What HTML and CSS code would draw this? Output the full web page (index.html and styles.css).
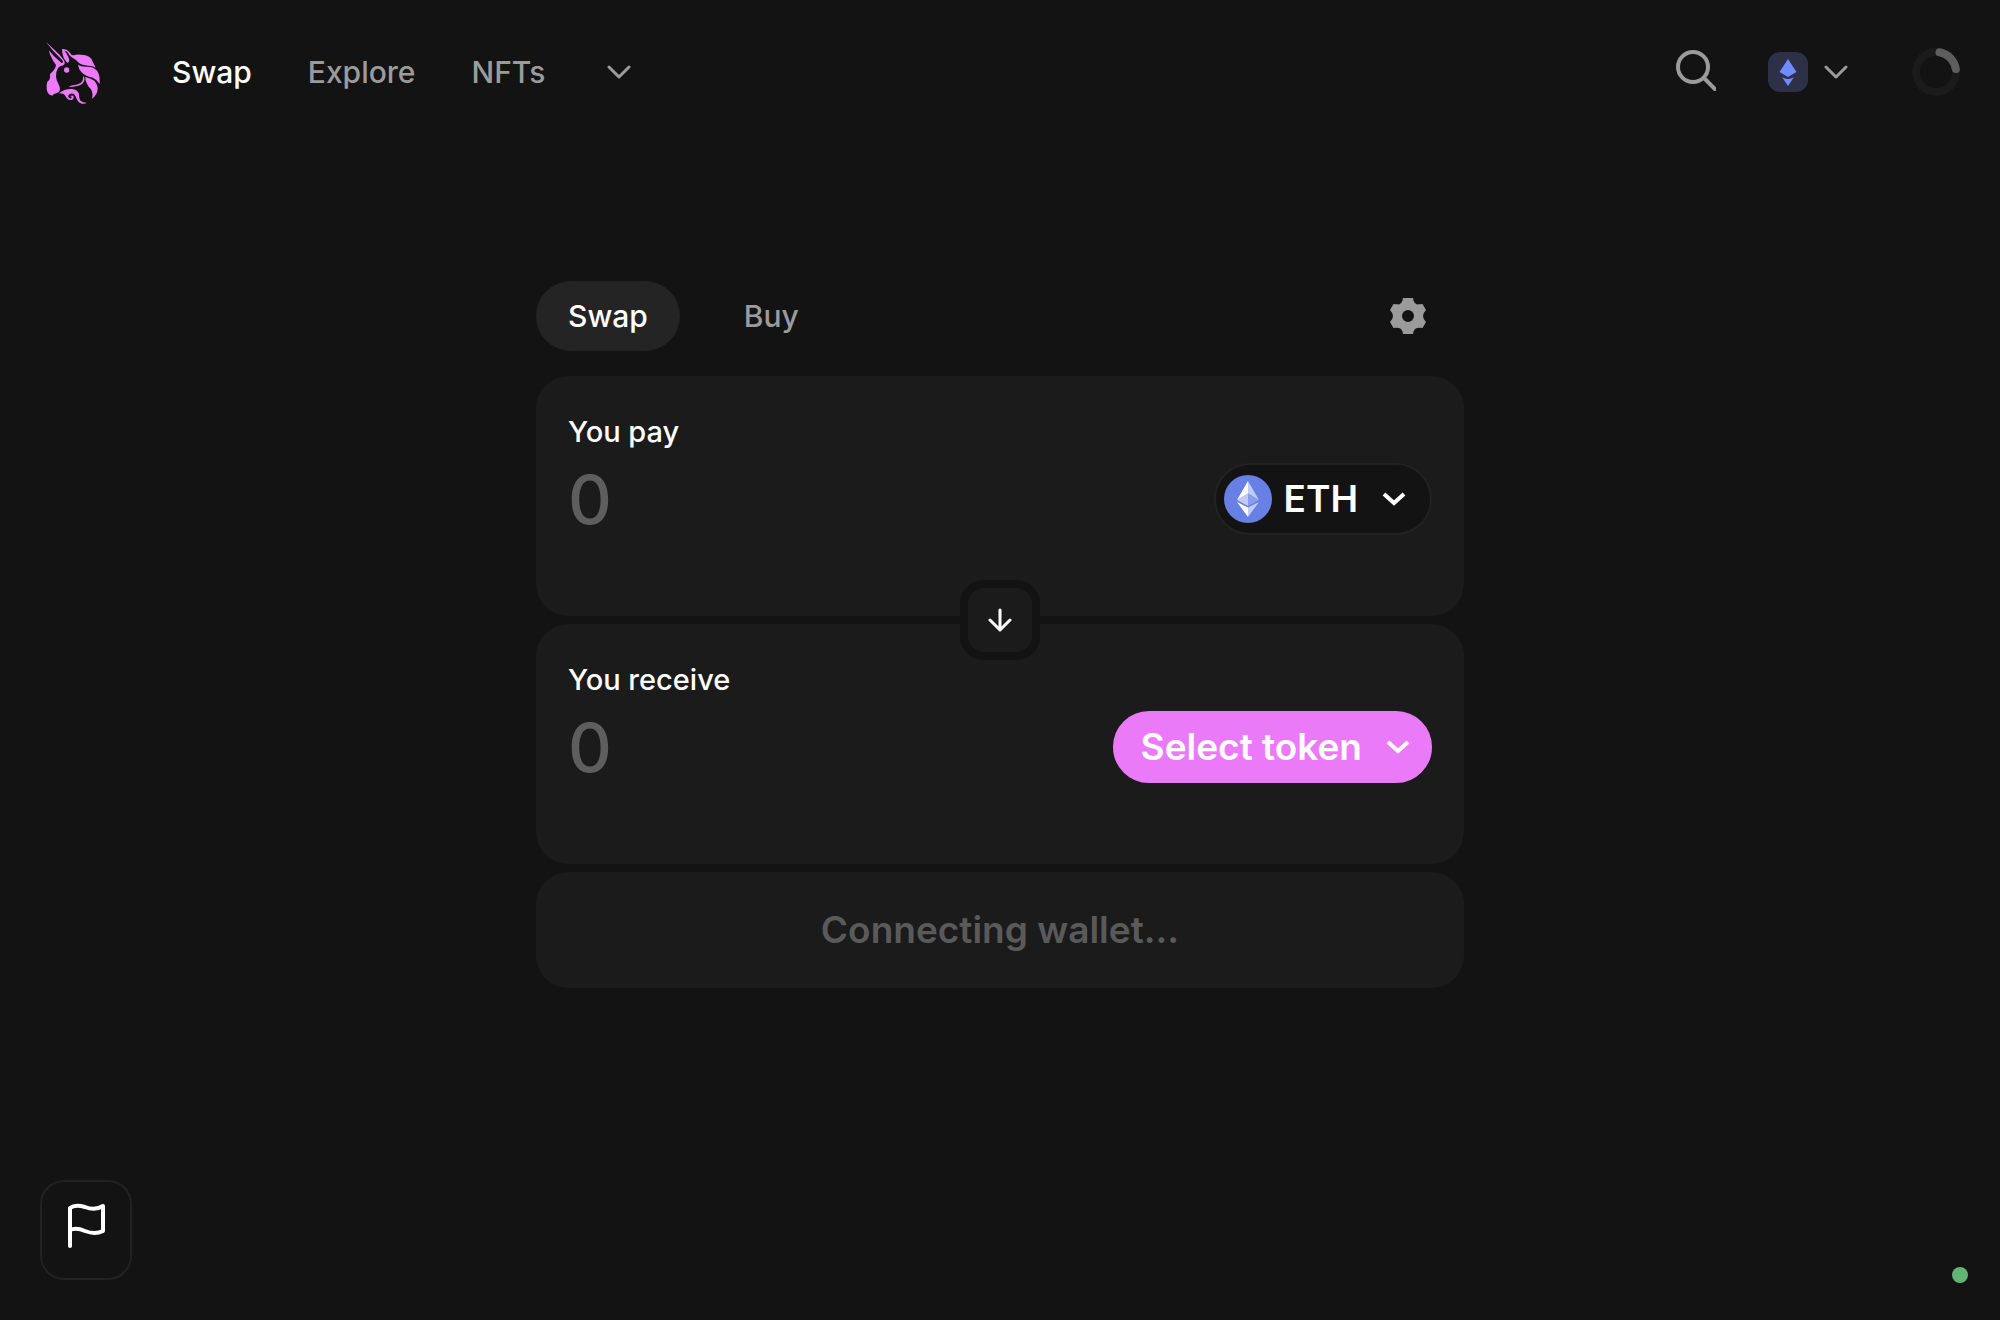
FILE: index.html
```html
<!DOCTYPE html>
<html lang="en">
<head>
<meta charset="utf-8">
<meta name="viewport" content="width=device-width, initial-scale=1">
<title>Uniswap Interface</title>
<link rel="stylesheet" href="styles.css">
</head>
<body>
<header class="header">
  <a class="logo" href="#" aria-label="Home">
    <svg width="54" height="62" viewBox="48 36 162 186" fill="#ec7af9">
      <path d="M48 36L74 60Q92 76 101 90Q106 97 104 102Q101 106 97 107L92 108Q86 110 83 116Q77 126 78 139Q79 152 85 161Q91 171 90 180Q88 188 79 190Q71 191 67 197L59 194Q50 188 50 175Q49 164 52 155Q60 149 60 143L60 132Q72 121 76 113L78 105Q69 94 64 82Q58 70 57 61L72 79L94 98Q97 101 99 97Q99 93 94 88L70 63Z"/>
      <path d="M96 57Q109 55 118 66Q124 77 132 76Q140 73 152 74Q174 74 184 86Q189 97 197 113Q188 107 174 107Q156 106 147 99Q135 87 125 82Q116 75 113 67Q109 63 104 62Q116 78 118 91Q117 97 113 99Q97 87 96 57Z"/>
      <path d="M144 104Q155 112 173 110Q190 110 199 120Q211 131 209 162Q202 149 188 143Q165 139 154 126Q146 118 144 104Z"/>
      <path d="M165 141Q183 145 193 152Q203 163 203 177Q202 195 186 206Q190 190 183 178Q168 164 165 141Z"/>
      <path d="M159 138Q166 143 162 154Q158 164 145 167Q128 171 115 171Q123 165 139 164Q153 161 157 153Q160 147 159 138Z"/>
      <circle cx="110" cy="120" r="8"/>
      <path d="M87 190Q103 176 126 177Q143 179 147 192Q147 203 150 211Q157 219 171 218Q165 222 155 221Q145 218 142 211Q139 203 136 198Q132 189 122 191Q113 194 115 201Q119 208 125 204Q126 199 121 199Q127 193 131 200Q132 208 125 210Q115 211 110 204Q105 194 99 191Q93 190 87 190Z"/>
    </svg>
  </a>
  <nav class="nav">
    <a class="nav-link active" href="#">Swap</a>
    <a class="nav-link" href="#">Explore</a>
    <a class="nav-link" href="#">NFTs</a>
  </nav>
  <button class="icon-button more" aria-label="More">
    <svg class="line" width="24" height="16" viewBox="0 0 24 16"><path d="M2 3L12 13L22 3"/></svg>
  </button>
  <div class="tools">
    <button class="icon-button" aria-label="Search">
      <svg class="line search-line" width="40" height="44" viewBox="0 0 40 44"><circle cx="17" cy="17" r="15"/><path d="M28 28L39 39"/></svg>
    </button>
    <button class="icon-button network" aria-label="Select network">
      <svg width="40" height="40" viewBox="0 0 40 40"><rect width="40" height="40" rx="12" fill="#2d3047"/><path fill="#6f8bff" d="M20 7L28.500 20L20 25L11.500 20ZM14 25Q20 29 26 25L20 34Z"/></svg>
      <svg class="line" width="24" height="16" viewBox="0 0 24 16"><path d="M2 3L12 13L22 3"/></svg>
    </button>
    <svg class="spinner" width="48" height="48" viewBox="0 0 48 48" role="img" aria-label="Connecting"><circle cx="24" cy="24" r="20" stroke="#1b1b1b"/><path d="M27.500 4.300A20 20 0 0 1 43.800 21" stroke="#5e5e5e"/></svg>
  </div>
</header>
<main class="swap">
  <div class="tabs">
    <button class="tab selected">Swap</button>
    <button class="tab">Buy</button>
    <button class="icon-button settings" aria-label="Settings">
      <svg width="36" height="36" viewBox="0 0 36 36"><path fill="#9b9b9b" fill-rule="evenodd" d="M13 0H23Q23.500 5 27 6.500Q29 6 32.500 6L36 12Q33 15 33 18Q33 21 36 24L32.500 30Q29 29.500 27 30Q23.500 31 23 36H13Q12.500 31 9 30Q7 29.500 3.500 30L0 24Q3 21 3 18Q3 15 0 12L3.500 6Q7 6 9 6.500Q12.500 5 13 0ZM18 12A6 6 0 1 0 18 24A6 6 0 1 0 18 12Z"/></svg>
    </button>
  </div>
  <div class="panels">
    <section class="panel">
      <label class="panel-label" for="pay">You pay</label>
      <div class="panel-row">
        <input class="amount" id="pay" type="text" inputmode="decimal" placeholder="0">
        <button class="token">
          <svg width="48" height="48" viewBox="0 0 48 48"><circle cx="24" cy="24" r="24" fill="#687fe3"/><path fill="#fff" d="M24 6V18.500L13 25ZM24 32.500V42L13 27Z"/><path fill="#c1cbf5" d="M24 6L35 25L24 18.500ZM24 32.500L35 27L24 42ZM13 25L24 18.500V31Z"/><path fill="#8a9dec" d="M24 18.500L35 25L24 31Z"/></svg>
          <span>ETH</span>
          <svg class="line strong" width="24" height="16" viewBox="0 0 24 16"><path d="M2 3L12 12L22 3"/></svg>
        </button>
      </div>
    </section>
    <button class="flip" aria-label="Switch tokens">
      <svg class="line arrow" width="24" height="24" viewBox="0 0 24 24"><path d="M12 2V22M2 12L12 22L22 12"/></svg>
    </button>
    <section class="panel">
      <label class="panel-label" for="receive">You receive</label>
      <div class="panel-row">
        <input class="amount" id="receive" type="text" inputmode="decimal" placeholder="0">
        <button class="token select">
          <span>Select token</span>
          <svg class="line strong" width="24" height="16" viewBox="0 0 24 16"><path d="M2 3L12 12L22 3"/></svg>
        </button>
      </div>
    </section>
  </div>
  <button class="submit" disabled>Connecting wallet...</button>
</main>
<button class="flag" aria-label="Feature flags">
  <svg class="line" width="40" height="48" viewBox="0 0 40 48"><path d="M4 44V6Q9 2 19 5Q29 9 37 4V29Q29 33 19 29Q10 25 4 28"/></svg>
</button>
<span class="status" role="img" aria-label="Network online"></span>
</body>
</html>
```
FILE: styles.css
```css
* { box-sizing: border-box; }
body {
  margin: 0;
  min-height: 100vh;
  background: #131313;
  color: #fff;
  font: 500 30px/40px Inter, "Liberation Sans", sans-serif;
}
button, input {
  margin: 0;
  padding: 0;
  border: 0;
  background: none;
  color: inherit;
  font: inherit;
}
button { cursor: pointer; }
a { color: inherit; text-decoration: none; }
svg { display: block; flex: none; }

.line {
  fill: none;
  stroke: currentColor;
  stroke-width: 3;
  stroke-linecap: round;
  stroke-linejoin: round;
}
.search-line { stroke-width: 4; }
.strong { stroke-width: 4; stroke-linecap: butt; stroke-linejoin: miter; }

.header {
  display: flex;
  align-items: center;
  height: 144px;
  padding: 0 40px 0 46px;
}
.logo { padding-top: 2px; }
.nav { display: flex; gap: 56px; margin-left: 72px; }
.nav-link { color: #9b9b9b; }
.nav-link.active { color: #fff; }
.icon-button { display: flex; align-items: center; color: #9b9b9b; }
.more { margin-left: 62px; }
.tools { display: flex; align-items: center; gap: 52px; margin-left: auto; }
.network { gap: 16px; }
.spinner { margin-left: 12px; fill: none; stroke-width: 8; stroke-linecap: round; }

.swap {
  max-width: 928px;
  margin: 0 auto;
  padding: 137px 0 160px;
}
.tabs { display: flex; align-items: center; margin-bottom: 25px; }
.tab {
  height: 70px;
  padding: 0 32px;
  border-radius: 35px;
  color: #9b9b9b;
}
.tab.selected { background: #242424; color: #fff; }
.tab + .tab { margin-left: 32px; }
.settings { margin: 0 38px 0 auto; }

.panels { display: flex; flex-direction: column; gap: 8px; position: relative; }
.panel {
  min-height: 240px;
  padding: 36px 32px;
  border-radius: 32px;
  background: #1b1b1b;
}
.panel-label { display: block; font-size: 29px; }
.panel-row { display: flex; align-items: center; justify-content: space-between; margin-top: 11px; }
.amount {
  flex: 1;
  min-width: 0;
  height: 72px;
  font-size: 68px;
  line-height: 72px;
  outline: 0;
}
.amount::placeholder { color: #5e5e5e; opacity: 1; }
.token {
  display: flex;
  align-items: center;
  height: 72px;
  padding: 0 24px 0 8px;
  border: 2px solid #222;
  border-radius: 36px;
  background: #131313;
  font-size: 37px;
  font-weight: 600;
}
.token span { padding: 0 24px 0 12px; }
.token.select { padding-left: 14px; padding-right: 20px; border-color: #eb7af8; background: #eb7af8; }
.flip {
  position: absolute;
  top: 50%;
  left: 50%;
  transform: translate(-50%, -50%);
  display: grid;
  place-items: center;
  width: 80px;
  height: 80px;
  border: 8px solid #131313;
  border-radius: 24px;
  background: #1b1b1b;
}
.submit {
  width: 100%;
  margin-top: 8px;
  padding: 38px 32px;
  border-radius: 32px;
  background: #1b1b1b;
  color: #5a5a5a;
  font-size: 37px;
  font-weight: 600;
}

.flag {
  position: fixed;
  left: 40px;
  bottom: 40px;
  display: flex;
  width: 92px;
  height: 100px;
  padding: 20px 24px;
  border: 2px solid #222;
  border-radius: 24px;
}
.flag .line { stroke-width: 4; }
.status {
  position: fixed;
  right: 32px;
  bottom: 37px;
  width: 16px;
  height: 16px;
  border-radius: 50%;
  background: #62b574;
}
```
